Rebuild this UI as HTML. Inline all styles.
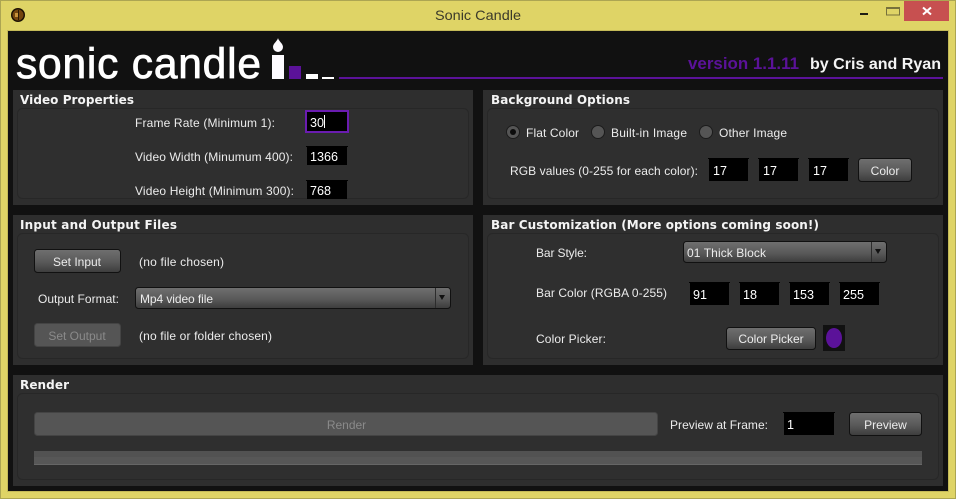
<!DOCTYPE html>
<html lang="en">
<head>
<meta charset="utf-8">
<title>Sonic Candle</title>
<style>
html,body{margin:0;padding:0;width:956px;height:499px;overflow:hidden;background:#dfd466}
svg{display:block}
text{font-family:"Liberation Sans",Arial,sans-serif;font-size:12px;fill:#ececec}
.h{font-family:"DejaVu Sans",sans-serif;font-weight:700;font-size:12px;fill:#f4f4f4}
.d{fill:#8a8a8a}
.v{fill:#fff;font-size:12.600px}
.p{fill:#2e2e2e}
.i{fill:#2f2f2f;stroke:#272727;stroke-width:1}
.b{fill:url(#btn);stroke:#111;stroke-width:1}
.x{fill:#000}
</style>
</head>
<body>
<svg width="956" height="499" viewBox="0 0 956 499" xmlns="http://www.w3.org/2000/svg">
<defs>
<linearGradient id="btn" x1="0" y1="0" x2="0" y2="1">
<stop offset="0" stop-color="#707070"/><stop offset="0.55" stop-color="#595959"/><stop offset="1" stop-color="#3c3c3c"/>
</linearGradient>
</defs>

<!-- window frame -->
<rect x="0.5" y="0.5" width="955" height="498" fill="#dfd466" stroke="#aca552"/>
<rect x="8" y="31" width="940" height="460" fill="#111"/>
<rect x="7.5" y="30.5" width="941" height="461" fill="none" stroke="#c4ba58"/>

<!-- title bar -->
<circle cx="18" cy="15" r="7" fill="#1d1204"/>
<circle cx="18" cy="15" r="5.500" fill="#74460f"/>
<rect x="15" y="13" width="3" height="4" fill="#c8923a"/>
<rect x="18" y="10" width="1" height="10" fill="#2a1a06"/>
<text x="435" y="20" textLength="86" lengthAdjust="spacingAndGlyphs" style="font-size:14px;fill:#3b3a2a">Sonic Candle</text>
<rect x="860" y="13" width="8" height="2" fill="#1e1e14"/>
<rect x="886.500" y="8" width="13" height="7" fill="none" stroke="#77713c"/>
<rect x="886" y="7" width="14" height="2" fill="#77713c"/>
<rect x="904" y="1" width="45" height="20" fill="#c75050"/>
<path d="M923 7.500L931 14.500M931 7.500L923 14.500" stroke="#fff" stroke-width="2" fill="none"/>

<!-- logo -->
<text x="16" y="78" textLength="245" style="font-size:42.500px;fill:#fff;stroke:#fff;stroke-width:.8">sonic candle</text>
<rect x="272" y="55" width="12" height="24" fill="#fdfbff"/>
<path d="M278 38C278.500 41 283 43.500 283 47A5 5 0 0 1 273 47C273 43.500 277.500 41 278 38Z" fill="#fdfbff"/>
<rect x="289" y="66" width="12" height="13" fill="#5b1299"/>
<rect x="306" y="74" width="12" height="5" fill="#fff"/>
<rect x="322" y="77" width="12" height="2" fill="#fff"/>
<rect x="339" y="77" width="604" height="2" fill="#5b1299"/>
<text x="688" y="69" textLength="111" lengthAdjust="spacingAndGlyphs" style="font-size:17px;font-weight:700;fill:#5b1299">version 1.1.11</text>
<text x="810" y="69" textLength="131" lengthAdjust="spacingAndGlyphs" style="font-size:16px;font-weight:700;fill:#f4f4f4">by Cris and Ryan</text>

<!-- panels -->
<rect class="p" x="13" y="90" width="460" height="115"/>
<rect class="i" x="17.500" y="108.500" width="451" height="90" rx="5"/>
<rect class="p" x="483" y="90" width="460" height="115"/>
<rect class="i" x="487.500" y="108.500" width="451" height="90" rx="5"/>
<rect class="p" x="13" y="215" width="460" height="150"/>
<rect class="i" x="17.500" y="233.500" width="451" height="125" rx="5"/>
<rect class="p" x="483" y="215" width="460" height="150"/>
<rect class="i" x="487.500" y="233.500" width="451" height="125" rx="5"/>
<rect class="p" x="13" y="375" width="930" height="111"/>
<rect class="i" x="17.500" y="393.500" width="921" height="86" rx="5"/>

<!-- headers -->
<text class="h" x="20" y="104" textLength="114">Video Properties</text>
<text class="h" x="20" y="229" textLength="157">Input and Output Files</text>
<text class="h" x="491" y="104" textLength="139">Background Options</text>
<text class="h" x="491" y="229" textLength="328">Bar Customization (More options coming soon!)</text>
<text class="h" x="20" y="389" textLength="49">Render</text>

<!-- video properties -->
<text x="135" y="127" textLength="140">Frame Rate (Minimum 1):</text>
<text x="135" y="161" textLength="158">Video Width (Minumum 400):</text>
<text x="135" y="195" textLength="159">Video Height (Minimum 300):</text>
<rect x="306" y="111" width="42" height="21" fill="#000" stroke="#6a1cb0" stroke-width="2"/>
<text class="v" x="310" y="127">30</text>
<rect x="324" y="115" width="1" height="13" fill="#fff"/>
<rect class="x" x="307" y="146" width="40" height="19"/><rect class="x" x="306" y="146" width="42" height="1"/>
<text class="v" x="310" y="161">1366</text>
<rect class="x" x="307" y="180" width="40" height="19"/><rect class="x" x="306" y="180" width="42" height="1"/>
<text class="v" x="310" y="195">768</text>

<!-- background options -->
<circle cx="513" cy="132" r="6.500" fill="#555" stroke="#1c1c1c"/>
<circle cx="513" cy="132" r="3" fill="#0c0c0c"/>
<circle cx="598" cy="132" r="6.500" fill="#555" stroke="#1c1c1c"/>
<circle cx="706" cy="132" r="6.500" fill="#555" stroke="#1c1c1c"/>
<text x="526" y="137" textLength="53">Flat Color</text>
<text x="611" y="137" textLength="76">Built-in Image</text>
<text x="719" y="137" textLength="68">Other Image</text>
<text x="510" y="175" textLength="188">RGB values (0-255 for each color):</text>
<rect class="x" x="709" y="158" width="39" height="23"/><rect class="x" x="708" y="158" width="41" height="1"/>
<rect class="x" x="759" y="158" width="39" height="23"/><rect class="x" x="758" y="158" width="41" height="1"/>
<rect class="x" x="809" y="158" width="39" height="23"/><rect class="x" x="808" y="158" width="41" height="1"/>
<text class="v" x="713" y="175">17</text>
<text class="v" x="763" y="175">17</text>
<text class="v" x="813" y="175">17</text>
<rect class="b" x="858.500" y="158.500" width="53" height="23" rx="3"/>
<text x="885" y="175" text-anchor="middle">Color</text>

<!-- input & output -->
<rect class="b" x="34.500" y="249.500" width="86" height="23" rx="3"/>
<text x="77" y="266" text-anchor="middle">Set Input</text>
<text x="139" y="266" textLength="85">(no file chosen)</text>
<text x="38" y="303" textLength="81">Output Format:</text>
<rect class="b" x="135.500" y="287.500" width="315" height="21" rx="3"/>
<rect x="435" y="288" width="1" height="20" fill="#2c2c2c"/>
<text x="140" y="303" textLength="73">Mp4 video file</text>
<path d="M439 295H445L442 300Z" fill="#111"/>
<rect x="34.500" y="323.500" width="86" height="23" rx="3" fill="#555" stroke="#444"/>
<text class="d" x="77" y="340" text-anchor="middle">Set Output</text>
<text x="139" y="340" textLength="133">(no file or folder chosen)</text>

<!-- bar customization -->
<text x="536" y="257" textLength="51">Bar Style:</text>
<rect class="b" x="683.500" y="241.500" width="203" height="21" rx="3"/>
<rect x="871" y="242" width="1" height="20" fill="#2c2c2c"/>
<text x="687" y="257" textLength="79">01 Thick Block</text>
<path d="M875 249H881L878 254Z" fill="#111"/>
<text x="536" y="297" textLength="131">Bar Color (RGBA 0-255)</text>
<rect class="x" x="690" y="282" width="39" height="23"/><rect class="x" x="689" y="282" width="41" height="1"/>
<rect class="x" x="740" y="282" width="39" height="23"/><rect class="x" x="739" y="282" width="41" height="1"/>
<rect class="x" x="790" y="282" width="39" height="23"/><rect class="x" x="789" y="282" width="41" height="1"/>
<rect class="x" x="840" y="282" width="39" height="23"/><rect class="x" x="839" y="282" width="41" height="1"/>
<text class="v" x="693" y="299">91</text>
<text class="v" x="743" y="299">18</text>
<text class="v" x="793" y="299">153</text>
<text class="v" x="843" y="299">255</text>
<text x="536" y="343" textLength="70">Color Picker:</text>
<rect class="b" x="726.500" y="327.500" width="89" height="22" rx="3"/>
<text x="771" y="343" text-anchor="middle">Color Picker</text>
<rect x="823" y="325" width="22" height="26" fill="#111"/>
<ellipse cx="834" cy="338" rx="8" ry="10" fill="#5b1299"/>

<!-- render -->
<rect x="34.500" y="412.500" width="623" height="23" rx="3" fill="#555" stroke="#444"/>
<text class="d" x="346.500" y="429" text-anchor="middle">Render</text>
<text x="670" y="429" textLength="98">Preview at Frame:</text>
<rect class="x" x="784" y="412" width="50" height="23"/><rect class="x" x="783" y="412" width="52" height="1"/>
<text class="v" x="787" y="429">1</text>
<rect class="b" x="849.500" y="412.500" width="72" height="23" rx="3"/>
<text x="885.500" y="429" text-anchor="middle">Preview</text>
<rect x="34" y="451" width="888" height="14" fill="#575757"/>
<rect x="34" y="451" width="888" height="6" fill="#525252"/>
<rect x="34" y="464" width="888" height="1" fill="#666"/>
</svg>
</body>
</html>
